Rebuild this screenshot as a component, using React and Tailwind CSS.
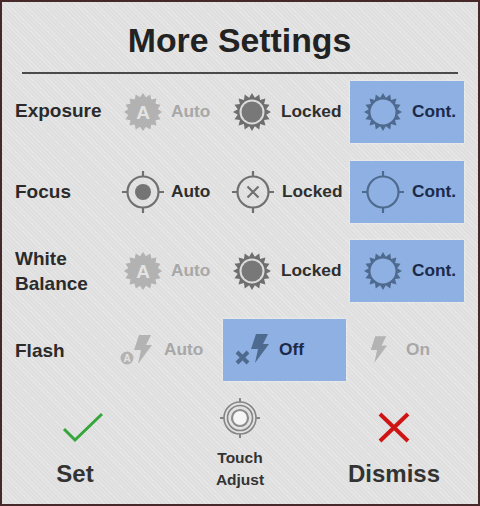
import React from 'react';

const burst = (spikes, outer, inner) => {
  const pts = [];
  for (let i = 0; i < spikes * 2; i++) {
    const r = i % 2 === 0 ? outer : inner;
    const a = (Math.PI * i) / spikes - Math.PI / 2;
    pts.push(`${(20 + r * Math.cos(a)).toFixed(2)},${(20 + r * Math.sin(a)).toFixed(2)}`);
  }
  return pts.join(' ');
};

const SunAuto = () => (
  <svg width="40" height="40" viewBox="0 0 40 40">
    <polygon points={burst(16, 19, 15)} fill="#b2b2b2" />
    <text x="20" y="26.5" textAnchor="middle" fontSize="19" fontWeight="700" fontFamily="Liberation Sans, sans-serif" fill="#e4e4e4">A</text>
  </svg>
);

const SunLocked = () => (
  <svg width="40" height="40" viewBox="0 0 40 40">
    <polygon points={burst(16, 19, 14.5)} fill="#6e6e6e" />
    <circle cx="20" cy="20" r="12.5" fill="#dcdcdc" />
    <circle cx="20" cy="20" r="10.5" fill="#787878" />
  </svg>
);

const SunCont = () => (
  <svg width="40" height="40" viewBox="0 0 40 40">
    <polygon points={burst(16, 19, 14.5)} fill="#4f6a8f" />
    <circle cx="20" cy="20" r="12.5" fill="#8fb0e3" />
  </svg>
);

const Target = ({ color = '#707070', children }) => (
  <svg width="42" height="42" viewBox="0 0 42 42">
    <g fill="none" stroke={color} strokeWidth="2.2">
      <circle cx="21" cy="21" r="15.5" />
      <path d="M21 0v5M21 37v5M0 21h5M37 21h5" />
    </g>
    {children}
  </svg>
);

const Bolt = ({ color }) => (
  <polygon points="8,0 20,0 15,10 21,10 7,29 10,15 3,15" fill={color} />
);

const FlashAuto = () => (
  <svg width="32" height="30" viewBox="0 0 32 30">
    <g transform="translate(11 0)"><Bolt color="#b3b3b3" /></g>
    <circle cx="7" cy="23" r="6.5" fill="#b3b3b3" />
    <text x="7" y="27" textAnchor="middle" fontSize="10" fontWeight="700" fontFamily="Liberation Sans, sans-serif" fill="#e4e4e4">A</text>
  </svg>
);

const FlashOff = () => (
  <svg width="34" height="32" viewBox="0 0 34 32">
    <g transform="translate(13 0)"><Bolt color="#4f6a8f" /></g>
    <path d="M2 18l11 11M13 18L2 29" stroke="#4f6a8f" strokeWidth="4" fill="none" />
  </svg>
);

const FlashOn = () => (
  <svg width="20" height="30" viewBox="0 0 22 30">
    <Bolt color="#b3b3b3" />
  </svg>
);

const Option = ({ icon, label, state, className }) => {
  const text =
    state === 'off' ? 'text-[#a8a8a8]' : state === 'on' ? 'text-[#1b2a4a]' : 'text-[#2e2e2e]';
  return (
    <div className={`flex items-center h-full ${state === 'on' ? 'bg-[#8fb0e3] shadow-[0_0_2px_#f2f5fa]' : ''} ${className}`}>
      {icon}
      <span className={`text-[17.3px] font-bold leading-none ${text}`}>{label}</span>
    </div>
  );
};

const Label = ({ children, className = 'w-[108px] pb-[2px]' }) => (
  <div className={`pl-[13px] text-[19px] font-bold leading-[25px] text-[#2b2b2b] ${className}`}>{children}</div>
);

const SunRow = ({ label, labelClass, className }) => (
  <div className={`flex items-center h-[62px] ${className}`}>
    <Label className={labelClass}>{label}</Label>
    <Option className="w-[122px] pl-[13px] gap-[8px]" state="off" icon={<SunAuto />} label="Auto" />
    <Option className="w-[118px] gap-[9px]" icon={<SunLocked />} label="Locked" />
    <Option className="w-[114px] pl-[13px] gap-[9px]" state="on" icon={<SunCont />} label="Cont." />
  </div>
);

export default function App() {
  return (
    <div className="w-[480px] h-[506px] border-2 border-[#46282a] bg-[#e3e3e3] bg-[repeating-linear-gradient(45deg,#e6e6e6_0,#e6e6e6_1px,#dfdfdf_1px,#dfdfdf_3px)] font-['Liberation_Sans',sans-serif] overflow-hidden">
      <div className="h-[70px] flex items-center justify-center pt-[7px] pr-[1px] text-[33.8px] font-bold text-[#222222]">
        More Settings
      </div>
      <div className="h-[2px] mx-[20px] bg-[#4a4a4a]" />

      <SunRow label="Exposure" labelClass="w-[108px] pb-[4px]" className="mt-[7px]" />

      <div className="flex items-center h-[62px] mt-[18px]">
        <Label>Focus</Label>
        <Option className="w-[122px] pl-[12px] gap-[7px]" icon={<Target><circle cx="21" cy="21" r="8" fill="#747474" /></Target>} label="Auto" />
        <Option className="w-[118px] gap-[8px]" icon={<Target><path d="M15.5 15.5l11 11M26.5 15.5l-11 11" stroke="#707070" strokeWidth="2.2" /></Target>} label="Locked" />
        <Option className="w-[114px] pl-[12px] gap-[8px]" state="on" icon={<Target color="#4f6a8f" />} label="Cont." />
      </div>

      <SunRow
        className="mt-[17px]"
        labelClass="w-[108px] pb-[1px]"
        label={<>White<br />Balance</>}
      />

      <div className="flex items-center h-[62px] mt-[17px]">
        <Label className="w-[93px]">Flash</Label>
        <Option className="w-[128px] pl-[25px] gap-[12px]" state="off" icon={<FlashAuto />} label="Auto" />
        <Option className="w-[123px] pl-[12px] gap-[10px]" state="on" icon={<FlashOff />} label="Off" />
        <Option className="flex-1 pl-[22px] gap-[18px]" state="off" icon={<FlashOn />} label="On" />
      </div>

      <div className="flex mt-[16px]">
        <div className="w-[146px] flex flex-col items-center pt-[15px]">
          <svg className="ml-[16px]" width="42" height="31" viewBox="0 0 42 31">
            <path d="M2 17l11 11L40 2" fill="none" stroke="#35a53c" strokeWidth="3" />
          </svg>
          <span className="mt-[19px] text-[24px] font-bold leading-none text-[#333333]">Set</span>
        </div>
        <div className="w-[184px] flex flex-col items-center">
          <svg width="42" height="42" viewBox="0 0 42 42">
            <g fill="none" stroke="#858585" strokeWidth="1.6">
              <circle cx="21" cy="21" r="16" />
              <circle cx="21" cy="21" r="12.5" />
              <path d="M21 1v4M21 37v4M1 21h4M37 21h4" strokeWidth="2" />
            </g>
            <circle cx="21" cy="21" r="8" fill="#f5f5f5" stroke="#8c8c8c" strokeWidth="2.2" />
          </svg>
          <span className="mt-[8px] text-[15.5px] font-bold leading-[22px] text-center text-[#333333]">
            Touch<br />Adjust
          </span>
        </div>
        <div className="w-[124px] flex flex-col items-center pt-[15px]">
          <svg width="32" height="31" viewBox="0 0 32 31">
            <path d="M2 2l28 27M30 2L2 29" fill="none" stroke="#cf1414" strokeWidth="4" />
          </svg>
          <span className="mt-[19px] text-[24px] font-bold leading-none text-[#333333]">Dismiss</span>
        </div>
      </div>
    </div>
  );
}
